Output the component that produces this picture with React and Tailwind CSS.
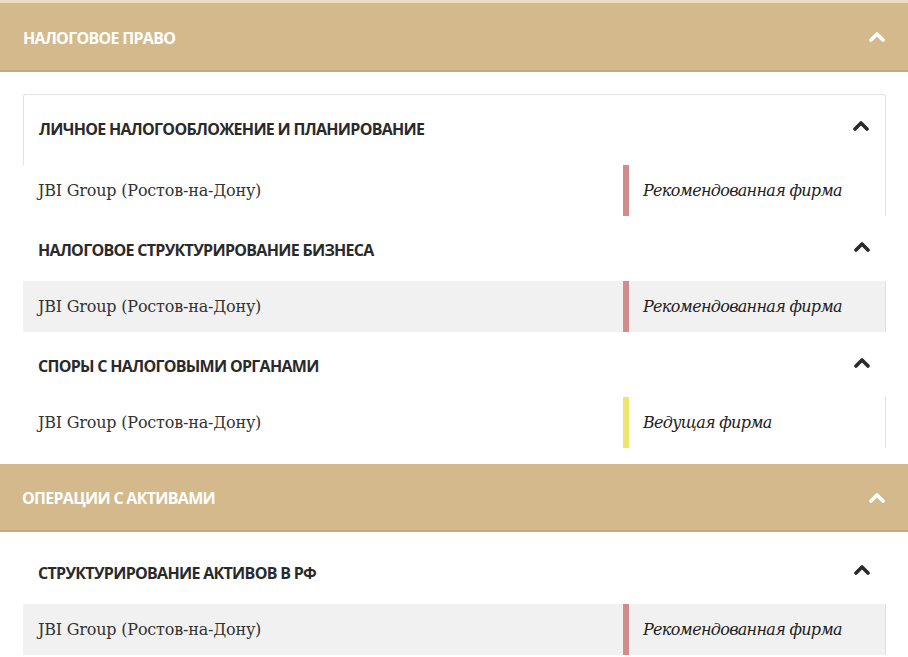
import React from "react";

const Chevron = ({ color }) => (
  <svg width="16" height="11" viewBox="0 0 16 11" className="block">
    <polyline points="2,9 8,3 14,9" fill="none" stroke={color} strokeWidth="3.6" strokeLinecap="round" strokeLinejoin="round" />
  </svg>
);

const sans = { fontFamily: '"Open Sans", sans-serif' };
const serif = { fontFamily: '"DejaVu Serif", serif' };

const SectionHeader = ({ title, h, pl }) => (
  <div className="flex items-center justify-between border-b-2 border-[#c2a87c] bg-[#d4b98c] pr-[22px]" style={{ height: h, paddingLeft: pl }}>
    <span className="pt-[2px] text-[16px] font-bold leading-[22px] tracking-[-0.7px] text-white" style={sans}>{title}</span>
    <span className="pr-[1px]"><Chevron color="#ffffff" /></span>
  </div>
);

const SubHeader = ({ title, h, pb, bordered }) => (
  <div
    className={
      "flex items-end justify-between pl-[15px] pr-[16px] " +
      (bordered ? "rounded-t-[3px] border-l border-r border-t border-[#e2e2e2] " : "")
    }
    style={{ height: h, paddingBottom: pb }}
  >
    <span className="text-[16px] font-bold leading-[22px] tracking-[-0.7px] text-[#2a2a2a]" style={sans}>{title}</span>
    <span className="pb-[9px]"><Chevron color="#2a2a2a" /></span>
  </div>
);

const Row = ({ gray, bar, rating }) => (
  <div className={"flex h-[51px] border-r border-[#e2e2e2] " + (gray ? "bg-[#f1f1f1]" : "bg-white")}>
    <div className="flex flex-1 items-center pl-[15px] text-[16px] text-[#333]" style={serif}>
      <span className="tracking-[-0.2px]">JBI Group (Ростов-на-Дону)</span>
    </div>
    <div className={"w-[6px] " + bar} />
    <div className="flex w-[256px] items-center pl-[14px] text-[16px] italic text-[#222]" style={serif}>
      <span className="tracking-[-0.7px]">{rating}</span>
    </div>
  </div>
);

export default function App() {
  return (
    <div className="h-[657px] w-[908px] overflow-hidden bg-white">
      <div className="h-[3px] bg-[#ecdcc6]" />
      <SectionHeader title="НАЛОГОВОЕ ПРАВО" h={69} pl={23} />
      <div className="pl-[23px] pr-[22px] pt-[22px]">
        <SubHeader title="ЛИЧНОЕ НАЛОГООБЛОЖЕНИЕ И ПЛАНИРОВАНИЕ" h={71} pb={25} bordered />
        <Row bar="bg-[#d48b8b]" rating="Рекомендованная фирма" />
        <SubHeader title="НАЛОГОВОЕ СТРУКТУРИРОВАНИЕ БИЗНЕСА" h={65} pb={20} />
        <Row gray bar="bg-[#d48b8b]" rating="Рекомендованная фирма" />
        <SubHeader title="СПОРЫ С НАЛОГОВЫМИ ОРГАНАМИ" h={65} pb={20} />
        <Row bar="bg-[#eee46e]" rating="Ведущая фирма" />
      </div>
      <div className="h-[16px]" />
      <SectionHeader title="ОПЕРАЦИИ С АКТИВАМИ" h={68} pl={22} />
      <div className="pl-[23px] pr-[22px]">
        <SubHeader title="СТРУКТУРИРОВАНИЕ АКТИВОВ В РФ" h={72} pb={20} />
        <Row gray bar="bg-[#d48b8b]" rating="Рекомендованная фирма" />
      </div>
    </div>
  );
}
